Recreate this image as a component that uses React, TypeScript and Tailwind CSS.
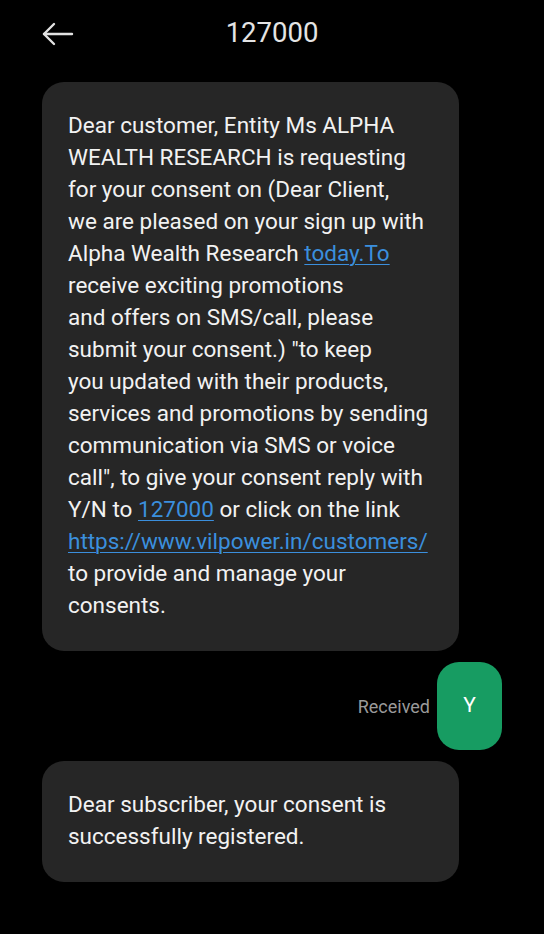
import React from "react";

const font = { fontFamily: "Roboto, 'Noto Sans', sans-serif" };

function Link({ children }: { children: React.ReactNode }) {
  return <span className="text-[#3b8fdd] underline underline-offset-[3px] decoration-1">{children}</span>;
}

const lines: React.ReactNode[] = [
  "Dear customer, Entity Ms ALPHA",
  "WEALTH RESEARCH is requesting",
  "for your consent on (Dear Client,",
  "we are pleased on your sign up with",
  <>Alpha Wealth Research <Link>today.To</Link></>,
  "receive exciting promotions",
  "and offers on SMS/call, please",
  "submit your consent.) \"to keep",
  "you updated with their products,",
  "services and promotions by sending",
  "communication via SMS or voice",
  "call\", to give your consent reply with",
  <>Y/N to <Link>127000</Link> or click on the link</>,
  <Link>https://www.vilpower.in/customers/</Link>,
  "to provide and manage your",
  "consents.",
];

function Bubble({ rows }: { rows: React.ReactNode[] }) {
  return (
    <div className="w-[417px] ml-[42px] rounded-[22px] bg-[#262626] pl-[26px] pr-4 pt-[27px] pb-[30px]">
      {rows.map((r, i) => (
        <div key={i} className="whitespace-nowrap text-[22.5px] leading-[32px] text-[#f2f2f2]">
          {r}
        </div>
      ))}
    </div>
  );
}

export default function App() {
  return (
    <div className="w-[544px] h-[934px] bg-black overflow-hidden" style={font}>
      {/* header */}
      <div className="relative h-[66px] flex items-center justify-center">
        <svg
          className="absolute left-[42px] top-[22px]"
          width="32"
          height="24"
          viewBox="0 0 32 24"
          fill="none"
          stroke="#e2e2e2"
          strokeWidth="2.4"
          strokeLinecap="round"
          strokeLinejoin="round"
        >
          <path d="M2 12 H30" />
          <path d="M12 2 L2 12 L12 22" />
        </svg>
        <span className="text-[27.5px] text-[#e4e4e4]">127000</span>
      </div>

      <div className="pt-4 flex flex-col gap-[11px]">
        <Bubble rows={lines} />

        <div className="flex items-center justify-end pr-[42px] gap-[7px]">
          <span className="text-[18px] text-[#9a9a9a]">Received</span>
          <div className="w-[65px] h-[88px] rounded-[22px] bg-[#179c62] flex items-center justify-center text-[21px] text-white">
            Y
          </div>
        </div>

        <Bubble rows={["Dear subscriber, your consent is", "successfully registered."]} />
      </div>
    </div>
  );
}
